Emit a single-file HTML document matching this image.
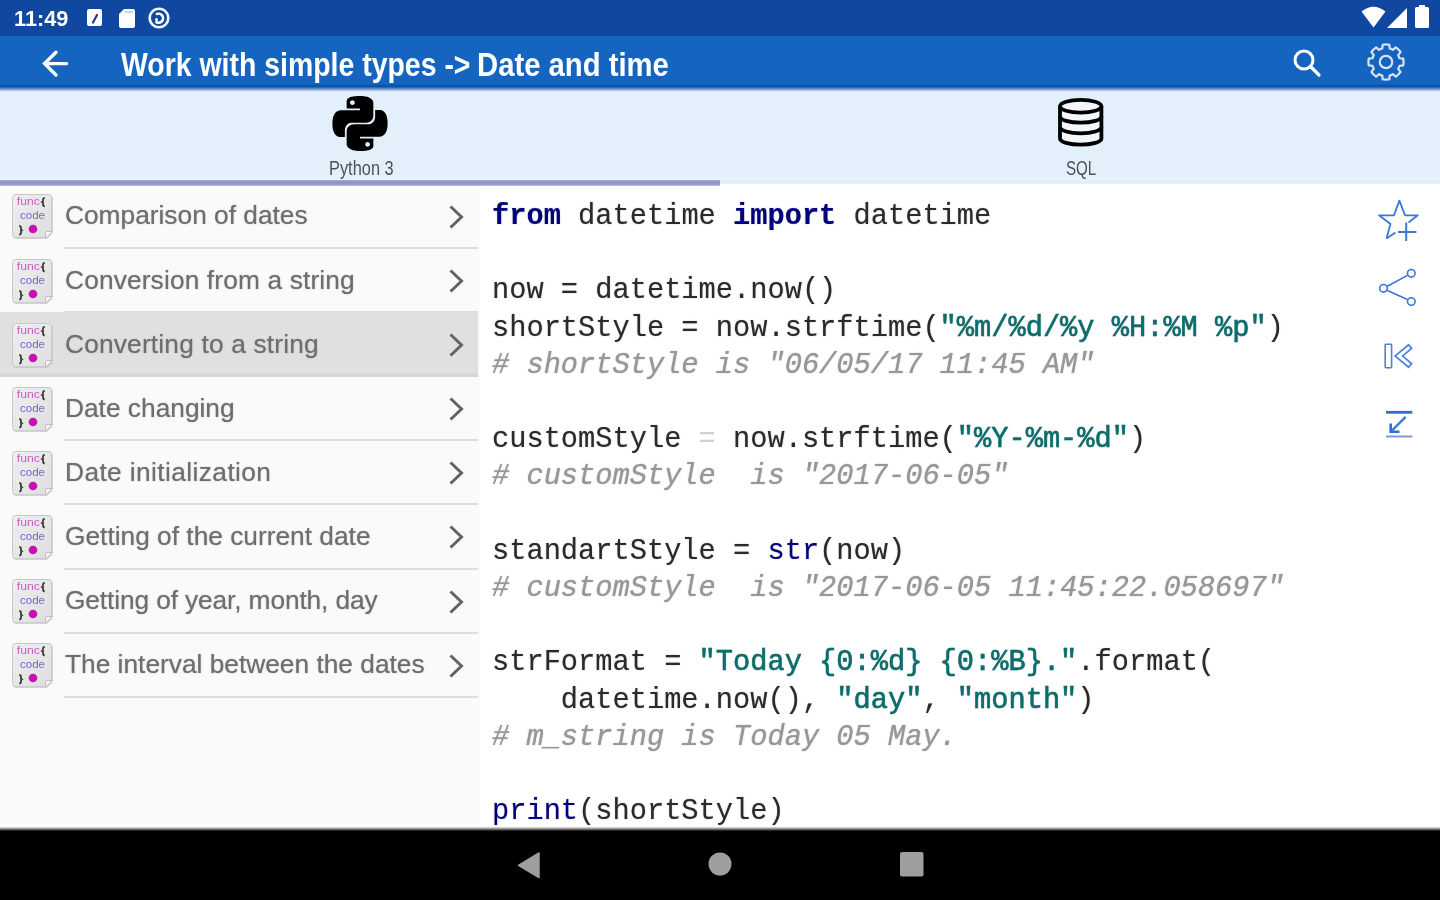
<!DOCTYPE html>
<html><head><meta charset="utf-8">
<style>
*{margin:0;padding:0;box-sizing:border-box}
html,body{width:1440px;height:900px;overflow:hidden;background:#fff;font-family:"Liberation Sans",sans-serif}
.abs{position:absolute}
svg{position:absolute;overflow:visible}
#status{left:0;top:0;width:1440px;height:36px;background:#0f47a1}
#toolbar{left:0;top:36px;width:1440px;height:50px;background:#1565c0}
#tbshadow{left:0;top:84px;width:1440px;height:9px;background:linear-gradient(#1565c0 0%,#0353b1 17%,#0a56b1 28%,#3d74be 44%,#8aa4d0 61%,#d0ddf0 78%,#e4f0fa 94%,#e3f0fb 100%)}
#tabs{left:0;top:88px;width:1440px;height:96px;background:#e3f0fb}
#ind{left:0;top:180px;width:720px;height:6px;background:linear-gradient(#aab4dc 0%,#8e97c5 22%,#8f96c4 70%,#c4c6e6 100%)}
#left{left:0;top:184px;width:480px;height:640px;background:linear-gradient(#fff 0px,#fff 5px,#fafafa 8px)}
#right{left:480px;top:184px;width:960px;height:644px;background:#fff}
#nav{left:0;top:826px;width:1440px;height:74px;background:linear-gradient(#fff 0.4px,#c8c8c8 1.8px,#808080 3px,#202020 4.6px,#000 5.3px)}
.row{position:absolute;left:0;width:480px;height:64px}
.t{position:absolute;left:65px;font-size:26.3px;color:#6e6e6e;white-space:nowrap;line-height:30px}
.sep{position:absolute;left:64px;width:414px;height:2px;background:#dedede}
.title{left:120px;top:44px;font-size:34px;line-height:40px;font-weight:bold;color:#fff;white-space:nowrap;transform-origin:0 0;transform:scaleX(0.845)}
.time{left:14px;top:6.3px;font-size:22.5px;line-height:26px;font-weight:bold;color:#fff;transform-origin:0 0;transform:scaleX(0.965)}
.lbl{font-size:19.4px;line-height:22px;color:#4e5256;white-space:nowrap;transform-origin:0 0}
pre{position:absolute;left:492px;top:198px;font-family:"Liberation Mono",monospace;font-size:28.7px;line-height:37.2px;color:#2a2a2a}
.kw{color:#000080;font-weight:bold}
.bi{color:#000080}
.st{color:#0a6e6c;-webkit-text-stroke:0.5px #0a6e6c}
.cm{color:#979797;font-style:italic}
.chev{position:absolute;left:448px}
.ico{position:absolute;left:12px;width:41px;height:45px}
#status{left:-10px;top:-10px;width:1460px;height:46px}
#toolbar{left:-10px;width:1460px}
#tabs{left:-10px;width:1460px}
#tbshadow{left:-10px;width:1460px}
#ind{left:-10px;width:730px}
#left{left:-10px;width:490px}
#right{width:970px}
#nav{left:-10px;width:1460px;height:84px}
.t{text-shadow:0 0 1.2px rgba(110,110,110,0.7)} pre{text-shadow:0 0 1.2px rgba(60,60,60,0.5)}</style></head><body><div id="root" style="position:absolute;left:0;top:0;width:1440px;height:900px;filter:blur(0.5px)">
<div id="status" class="abs"></div>
<div id="toolbar" class="abs"></div>
<div id="tabs" class="abs"></div>
<div id="tbshadow" class="abs"></div>
<div id="left" class="abs"></div>
<div id="right" class="abs"></div>
<div class="abs" style="left:0;top:176px;width:1440px;height:4px;background:linear-gradient(#e3f0fb,#e7f7fd)"></div>
<div id="ind" class="abs"></div>
<div id="nav" class="abs"></div>

<!-- status bar -->
<div class="abs time">11:49</div>
<svg style="left:87px;top:8.5px" width="15" height="17" viewBox="0 0 15 17"><rect x="0" y="0" width="15" height="17" rx="2" fill="#fff"/><path d="M10 6 L6 13.5" stroke="#1a3d9a" stroke-width="2.2" fill="none" stroke-linecap="round"/></svg>
<svg style="left:119px;top:9px" width="16" height="19" viewBox="0 0 16 19"><path d="M5 0 H14 Q16 0 16 2 V17 Q16 19 14 19 H2 Q0 19 0 17 V5 Z" fill="#fff"/><rect x="6" y="2" width="8" height="2" fill="#c8d6ee"/></svg>
<svg style="left:148px;top:7px" width="22" height="22" viewBox="0 0 22 22"><circle cx="11" cy="11" r="9.3" stroke="#f2f5fc" stroke-width="2.6" fill="none"/><path d="M8 7.5 A4.5 4.5 0 1 1 7.5 14.5" stroke="#fff" stroke-width="2.6" fill="none"/><circle cx="8.5" cy="12.5" r="1.5" fill="#fff"/></svg>
<svg style="left:1361px;top:6px" width="25" height="22" viewBox="0 0 25 22"><path d="M0.5 5.5 Q12.5 -4 24.5 5.5 L12.5 21.5 Z" fill="#fff"/></svg>
<svg style="left:1387px;top:8px" width="20" height="20" viewBox="0 0 20 20"><path d="M0 20 L20 0 V20 Z" fill="#fff"/><path d="M14 7 V20" stroke="#0f47a1" stroke-width="0"/></svg>
<svg style="left:1415px;top:5px" width="14" height="23" viewBox="0 0 14 23"><path d="M4 0 H10 V2 H12.5 Q14 2 14 3.5 V21.5 Q14 23 12.5 23 H1.5 Q0 23 0 21.5 V3.5 Q0 2 1.5 2 H4 Z" fill="#fff"/></svg>

<!-- toolbar -->
<svg style="left:42px;top:50px" width="27" height="27" viewBox="0 0 27 27"><path d="M24.6 13.6 H3.5 M14 2.2 L2.6 13.6 L14 25" stroke="#fff" stroke-width="3.4" fill="none" stroke-linecap="round" stroke-linejoin="miter"/></svg>
<div class="abs title" style="left:120.6px;transform:scaleX(0.8363)">Work with simple types -&gt;</div><div class="abs title" style="left:477.3px;transform:scaleX(0.8607)">Date and time</div>
<svg style="left:1290px;top:46px" width="32" height="32" viewBox="0 0 32 32"><circle cx="14" cy="14" r="9" stroke="#fff" stroke-width="3" fill="none"/><path d="M20.5 20.5 L29 29" stroke="#fff" stroke-width="3.2" stroke-linecap="round"/></svg>
<svg style="left:1362.2px;top:38.2px" width="48" height="48" viewBox="0 0 48 48"><path d="M20.27 10.51 L20.68 6.72 Q24.00 6.05 27.32 6.72 L27.73 10.51 A14.00 14.00 0 0 1 30.90 11.82 L33.87 9.43 Q36.69 11.31 38.57 14.13 L36.18 17.10 A14.00 14.00 0 0 1 37.49 20.27 L41.28 20.68 Q41.95 24.00 41.28 27.32 L37.49 27.73 A14.00 14.00 0 0 1 36.18 30.90 L38.57 33.87 Q36.69 36.69 33.87 38.57 L30.90 36.18 A14.00 14.00 0 0 1 27.73 37.49 L27.32 41.28 Q24.00 41.95 20.68 41.28 L20.27 37.49 A14.00 14.00 0 0 1 17.10 36.18 L14.13 38.57 Q11.31 36.69 9.43 33.87 L11.82 30.90 A14.00 14.00 0 0 1 10.51 27.73 L6.72 27.32 Q6.05 24.00 6.72 20.68 L10.51 20.27 A14.00 14.00 0 0 1 11.82 17.10 L9.43 14.13 Q11.31 11.31 14.13 9.43 L17.10 11.82 A14.00 14.00 0 0 1 20.27 10.51 Z" stroke="#d8e4f6" stroke-width="2.2" fill="none" stroke-linejoin="round"/><circle cx="24" cy="24" r="6.2" stroke="#d8e4f6" stroke-width="2.2" fill="none"/></svg>

<!-- tabs -->
<svg style="left:332px;top:96px" width="56" height="55" viewBox="0 0 24 24"><path fill="#000" d="M14.25.18l.9.2.73.26.59.3.45.32.34.34.25.34.16.33.1.3.04.26.02.2-.01.13V8.5l-.05.63-.13.55-.21.46-.26.38-.3.31-.33.25-.35.19-.35.14-.33.1-.3.07-.26.04-.21.02H8.770l-.69.05-.59.14-.5.22-.41.27-.33.32-.27.35-.2.36-.15.37-.1.35-.07.32-.04.27-.02.21v3.06H3.17l-.21-.03-.28-.07-.32-.12-.35-.18-.36-.26-.36-.36-.35-.46-.32-.59-.28-.73-.21-.88-.14-1.05-.05-1.23.06-1.22.16-1.04.24-.87.32-.71.36-.57.4-.44.42-.33.42-.24.4-.16.36-.1.32-.05.24-.01h.16l.06.01h8.16v-.83H6.18l-.01-2.75-.02-.37.05-.34.11-.31.17-.28.25-.26.31-.23.38-.2.44-.18.51-.15.58-.12.64-.1.71-.06.77-.04.84-.02 1.27.05zm-6.3 1.98l-.23.33-.08.41.08.41.23.34.33.22.41.09.41-.09.33-.22.23-.34.08-.41-.08-.41-.23-.33-.33-.22-.41-.09-.41.09zm13.09 3.95l.28.06.32.12.35.18.36.27.36.35.35.47.32.59.28.73.21.88.14 1.04.05 1.23-.06 1.23-.16 1.04-.24.86-.32.71-.36.57-.4.45-.42.33-.42.24-.4.16-.36.09-.32.05-.24.02-.16-.01h-8.22v.82h5.84l.01 2.76.02.36-.05.34-.11.31-.17.29-.25.25-.31.24-.38.2-.44.17-.51.15-.58.13-.64.09-.71.07-.77.04-.84.01-1.27-.04-1.07-.14-.9-.2-.73-.25-.59-.3-.45-.33-.34-.34-.25-.34-.16-.33-.1-.3-.04-.25-.02-.2.01-.13v-5.34l.05-.64.13-.54.21-.46.26-.38.3-.32.33-.24.35-.2.35-.14.33-.1.3-.06.26-.04.21-.02.13-.01h5.84l.69-.05.59-.14.5-.21.41-.28.33-.32.27-.35.2-.36.15-.36.1-.35.07-.32.04-.28.02-.21V6.07h2.09l.14.01zm-6.47 14.25l-.23.33-.08.41.08.41.23.33.33.23.41.08.41-.08.33-.23.23-.33.08-.41-.08-.41-.23-.33-.33-.23-.41-.08-.41.08z"/></svg>
<div class="abs lbl" style="left:329px;top:157px;transform:scaleX(0.845)">Python 3</div>
<svg style="left:1056px;top:96px" width="50" height="54" viewBox="0 0 50 54"><path d="M4 10.25 A20.7 6.35 0 0 1 45.4 10.25 V42.4 A20.7 6.3 0 0 1 4 42.4 Z" fill="#f3f7fc"/><g stroke="#000" stroke-width="3.8" fill="none"><ellipse cx="24.7" cy="10.25" rx="20.7" ry="6.35"/><path d="M4 10.25 V42.4 A20.7 6.3 0 0 0 45.4 42.4 V10.25"/><path d="M4 20.4 A20.7 6.3 0 0 0 45.4 20.4"/><path d="M4 31 A20.7 6.3 0 0 0 45.4 31"/></g></svg>
<div class="abs lbl" style="left:1066px;top:157px;transform:scaleX(0.78)">SQL</div>

<!-- list -->
<svg width="0" height="0" style="position:absolute"><defs>
<symbol id="codeico" viewBox="0 0 41 45">
<defs><linearGradient id="icg" x1="0" y1="0" x2="1" y2="1"><stop offset="0" stop-color="#efefef"/><stop offset="1" stop-color="#dedede"/></linearGradient></defs>
<path d="M4.5 1.5 H37.5 Q40.8 1.5 40.8 5 V39 L35 44.8 H4.5 Q1 44.8 1 41.3 V5 Q1 1.5 4.5 1.5 Z" fill="#bdbdbd" opacity="0.8"/><path d="M4 0.5 H36.5 Q39.8 0.5 39.8 4 V37.5 L33.5 43.8 H4 Q0.5 43.8 0.5 40.3 V4 Q0.5 0.5 4 0.5 Z" fill="url(#icg)" stroke="#c8c8c8" stroke-width="1"/>
<path d="M39.8 37.5 L34.5 37.5 Q33.5 37.5 33.5 38.5 V43.8" fill="#f6f6f6" stroke="#bcbcbc" stroke-width="1"/>
<text x="4.8" y="11" font-family="Liberation Sans" font-size="10" fill="#d257cc" textLength="23" lengthAdjust="spacingAndGlyphs">func</text>
<path d="M32.8 3.8 Q31 3.8 31 6 V7.3 L30 8 L31 8.7 V10.3 Q31 12.4 32.8 12.4" stroke="#3c3c3c" stroke-width="1.8" fill="none"/>
<text x="8" y="24.5" font-family="Liberation Sans" font-size="10" fill="#7c62d4" textLength="25" lengthAdjust="spacingAndGlyphs">code</text>
<path d="M7.2 32 Q9 32 9 34.2 V35.5 L10 36.2 L9 36.9 V38.5 Q9 40.6 7.2 40.6" stroke="#3c3c3c" stroke-width="1.8" fill="none"/>
<circle cx="21" cy="35" r="4.3" fill="#c412b4"/>
</symbol></defs></svg>
<div class="sep" style="top:246.6px"></div>
<div class="t" style="top:200.4px">Comparison of dates</div>
<svg class="ico" style="top:194.4px" viewBox="0 0 41 45"><use href="#codeico"/></svg>
<svg class="chev" style="top:204.7px" width="16" height="24" viewBox="0 0 16 24"><path d="M2.5 1.5 L13.5 12 L2.5 22.5" stroke="#636363" stroke-width="3" fill="none"/></svg>
<div class="sep" style="top:310.8px"></div>
<div class="t" style="top:264.5px;letter-spacing:0.14px">Conversion from a string</div>
<svg class="ico" style="top:258.5px" viewBox="0 0 41 45"><use href="#codeico"/></svg>
<svg class="chev" style="top:268.8px" width="16" height="24" viewBox="0 0 16 24"><path d="M2.5 1.5 L13.5 12 L2.5 22.5" stroke="#636363" stroke-width="3" fill="none"/></svg>
<div class="abs" style="left:0;top:312px;width:478px;height:65px;background:linear-gradient(#e0e0e0 0,#e0e0e0 60.5px,#d7d7d7 61.5px,#d7d7d7 64px,#e6e6e6 65px)"></div>
<div class="sep" style="top:374.5px;left:0;width:478px;height:2.5px;background:#d7d7d7"></div>
<div class="t" style="top:328.7px;letter-spacing:0.18px">Converting to a string</div>
<svg class="ico" style="top:322.7px" viewBox="0 0 41 45"><use href="#codeico"/></svg>
<svg class="chev" style="top:333.0px" width="16" height="24" viewBox="0 0 16 24"><path d="M2.5 1.5 L13.5 12 L2.5 22.5" stroke="#636363" stroke-width="3" fill="none"/></svg>
<div class="sep" style="top:439.2px"></div>
<div class="t" style="top:392.8px">Date changing</div>
<svg class="ico" style="top:386.8px" viewBox="0 0 41 45"><use href="#codeico"/></svg>
<svg class="chev" style="top:397.1px" width="16" height="24" viewBox="0 0 16 24"><path d="M2.5 1.5 L13.5 12 L2.5 22.5" stroke="#636363" stroke-width="3" fill="none"/></svg>
<div class="sep" style="top:503.4px"></div>
<div class="t" style="top:456.9px;letter-spacing:0.40px">Date initialization</div>
<svg class="ico" style="top:450.9px" viewBox="0 0 41 45"><use href="#codeico"/></svg>
<svg class="chev" style="top:461.2px" width="16" height="24" viewBox="0 0 16 24"><path d="M2.5 1.5 L13.5 12 L2.5 22.5" stroke="#636363" stroke-width="3" fill="none"/></svg>
<div class="sep" style="top:567.6px"></div>
<div class="t" style="top:521.0px">Getting of the current date</div>
<svg class="ico" style="top:515.0px" viewBox="0 0 41 45"><use href="#codeico"/></svg>
<svg class="chev" style="top:525.3px" width="16" height="24" viewBox="0 0 16 24"><path d="M2.5 1.5 L13.5 12 L2.5 22.5" stroke="#636363" stroke-width="3" fill="none"/></svg>
<div class="sep" style="top:631.8px"></div>
<div class="t" style="top:585.2px;letter-spacing:-0.12px">Getting of year, month, day</div>
<svg class="ico" style="top:579.2px" viewBox="0 0 41 45"><use href="#codeico"/></svg>
<svg class="chev" style="top:589.5px" width="16" height="24" viewBox="0 0 16 24"><path d="M2.5 1.5 L13.5 12 L2.5 22.5" stroke="#636363" stroke-width="3" fill="none"/></svg>
<div class="sep" style="top:696.0px"></div>
<div class="t" style="top:649.3px">The interval between the dates</div>
<svg class="ico" style="top:643.3px" viewBox="0 0 41 45"><use href="#codeico"/></svg>
<svg class="chev" style="top:653.6px" width="16" height="24" viewBox="0 0 16 24"><path d="M2.5 1.5 L13.5 12 L2.5 22.5" stroke="#636363" stroke-width="3" fill="none"/></svg>


<!-- code -->
<pre><span class="kw">from</span> datetime <span class="kw">import</span> datetime

now = datetime.now()
shortStyle = now.strftime(<span class="st">"%m/%d/%y %H:%M %p"</span>)
<span class="cm"># shortStyle is "06/05/17 11:45 AM"</span>

customStyle <span style="color:#d0d0d0;text-shadow:none">=</span> now.strftime(<span class="st">"%Y-%m-%d"</span>)
<span class="cm"># customStyle  is "2017-06-05"</span>

standartStyle = <span class="bi">str</span>(now)
<span class="cm"># customStyle  is "2017-06-05 11:45:22.058697"</span>

strFormat = <span class="st">"Today {0:%d} {0:%B}."</span>.format(
    datetime.now(), <span class="st">"day"</span>, <span class="st">"month"</span>)
<span class="cm"># m_string is Today 05 May.</span>

<span class="bi">print</span>(shortStyle)</pre>

<!-- side actions -->
<svg style="left:0;top:0" width="1440" height="900" viewBox="0 0 1440 900">
<g stroke="#3a78d4" stroke-width="2" fill="none" stroke-linejoin="round">
<path d="M1386.5 238.5 L1390.5 224 L1379 215.3 L1394 215.3 L1399.4 200.6 L1405 215.3 L1417.8 215.3 L1408.5 222.5" stroke-width="1.8"/>
<path d="M1386.5 238.5 L1395.5 232.5" stroke-width="1.8"/>
<path d="M1398 232 H1416.4 M1406.2 222.5 V241" stroke-width="2"/>
<circle cx="1411.3" cy="273.3" r="3.8" stroke-width="1.6"/>
<circle cx="1383.5" cy="288.3" r="3.8" stroke-width="1.6"/>
<circle cx="1411.3" cy="301.5" r="3.8" stroke-width="1.6"/>
<path d="M1387.3 286.2 L1407.5 275.4 M1387.3 290.4 L1407.5 299.4" stroke-width="1.6"/>
<rect x="1385.2" y="344.3" width="6.4" height="23.4" rx="0.6" stroke-width="1.6" stroke="#4a82d6"/>
<path d="M1410.8 346 L1398.8 356 L1410.8 366" stroke-width="6.4" stroke="#4a82d6" stroke-linejoin="miter" stroke-linecap="butt"/>
<path d="M1409.5 347.1 L1398.8 356 L1409.5 364.9" stroke-width="3" stroke="#fff" stroke-linejoin="miter" stroke-linecap="butt"/>
<path d="M1386 412.3 H1412.3" stroke-width="2.8" stroke="#2f6fd0"/>
<path d="M1405.6 416.9 L1392 430.5" stroke-width="2.4" stroke="#3a78d4"/>
<path d="M1390.7 423.5 V431.7 H1399.5" stroke-width="2.6" stroke="#2f6fd0" stroke-linejoin="miter"/>
<path d="M1386 436.5 H1412.3" stroke-width="2" stroke="#7a9ad8"/>
</g></svg>

<!-- nav -->
<svg style="left:516px;top:851px" width="26" height="28" viewBox="0 0 26 28"><path d="M23 2 V26.5 L2.5 14.3 Z" fill="#9e9e9e" stroke="#9e9e9e" stroke-width="1.5" stroke-linejoin="round"/></svg>
<svg style="left:708px;top:852px" width="24" height="24" viewBox="0 0 24 24"><circle cx="12" cy="12" r="11.5" fill="#9e9e9e"/></svg>
<svg style="left:900px;top:852px" width="24" height="25" viewBox="0 0 24 25"><rect x="0" y="0" width="23.5" height="24.5" rx="2" fill="#9e9e9e"/></svg>
</div></body></html>
